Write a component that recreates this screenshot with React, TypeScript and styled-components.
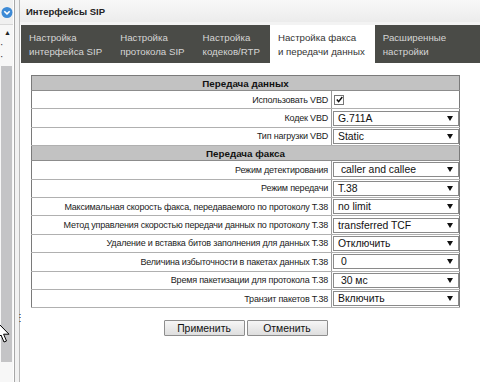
import React from "react";
import styled, { createGlobalStyle } from "styled-components";

const GlobalStyle = createGlobalStyle`
  html, body {
    margin: 0;
    padding: 0;
    background: #ffffff;
  }
  body {
    font-family: "Liberation Sans", Arial, sans-serif;
    color: #222;
  }
`;

type Row = { label: string; value?: string; checkbox?: boolean };

const tabs = [
  ["Настройка", "интерфейса SIP"],
  ["Настройка", "протокола SIP"],
  ["Настройка", "кодеков/RTP"],
  ["Настройка факса", "и передачи данных"],
  ["Расширенные", "настройки"],
];

const dataRows: Row[] = [
  { label: "Использовать VBD", checkbox: true },
  { label: "Кодек VBD", value: "G.711A" },
  { label: "Тип нагрузки VBD", value: "Static" },
];

const faxRows: Row[] = [
  { label: "Режим детектирования", value: " caller and callee" },
  { label: "Режим передачи", value: "T.38" },
  { label: "Максимальная скорость факса, передаваемого по протоколу T.38", value: "no limit" },
  { label: "Метод управления скоростью передачи данных по протоколу T.38", value: "transferred TCF" },
  { label: "Удаление и вставка битов заполнения для данных T.38", value: "Отключить" },
  { label: "Величина избыточности в пакетах данных T.38", value: " 0" },
  { label: "Время пакетизации для протокола T.38", value: " 30 мс" },
  { label: "Транзит пакетов T.38", value: "Включить" },
];

function App() {
  const renderRows = (rows: Row[]) =>
    rows.map((row) => (
      <DataRow key={row.label}>
        <LabelCell>{row.label}</LabelCell>
        <ValueCell>
          {row.checkbox ? (
            <CheckBox>
              <svg width="7" height="7" viewBox="0 0 7 7">
                <path d="M0.8 3.6 L2.6 5.6 L6.3 1" stroke="#111" strokeWidth="1.5" fill="none" />
              </svg>
            </CheckBox>
          ) : (
            <SelectBox>
              <SelectText>{row.value}</SelectText>
              <svg width="6" height="5" viewBox="0 0 6 5">
                <path d="M0 0 H6 L3 5 Z" fill="#111" />
              </svg>
            </SelectBox>
          )}
        </ValueCell>
      </DataRow>
    ));

  return (
    <>
      <GlobalStyle />
      <Page>
        <SidePane>
          <SideTop>
            <svg width="13" height="13" viewBox="0 0 13 13">
              <circle cx="7" cy="6.5" r="5.5" fill="#3d8ad6" />
              <path d="M4.3 5.2 L7 7.9 L9.7 5.2" stroke="#fff" strokeWidth="1.6" fill="none" />
            </svg>
          </SideTop>
          <SideArrow>▲</SideArrow>
          <SideMarks>
            <Mark>·</Mark>
            <Mark>·</Mark>
          </SideMarks>
          <ScrollTrack>
            <ScrollThumb />
          </ScrollTrack>
        </SidePane>
        <Splitter>
          <Grip>⋮</Grip>
        </Splitter>
        <Main>
          <TitleBar>Интерфейсы SIP</TitleBar>
          <TabBar>
            {tabs.map((t, i) => (
              <Tab key={i} $active={i === 3}>
                {t[0]}
                <br />
                {t[1]}
              </Tab>
            ))}
          </TabBar>
          <Content>
            <Table>
              <colgroup>
                <col style={{ width: 300 }} />
                <col />
              </colgroup>
              <tbody>
                <HeaderRow>
                  <HeaderCell colSpan={2}>Передача данных</HeaderCell>
                </HeaderRow>
                {renderRows(dataRows)}
                <HeaderRow>
                  <HeaderCell colSpan={2}>Передача факса</HeaderCell>
                </HeaderRow>
                {renderRows(faxRows)}
              </tbody>
            </Table>
            <Buttons>
              <Button>Применить</Button>
              <Button>Отменить</Button>
            </Buttons>
          </Content>
        </Main>
        <Cursor>
          <svg width="14" height="24" viewBox="0 0 14 24">
            <path
              d="M0 0 L0 17 L4 13 L7 20 L9.5 19 L6.6 12.2 L12 12.2 Z"
              fill="#fff"
              stroke="#000"
              strokeWidth="1"
            />
          </svg>
        </Cursor>
      </Page>
    </>
  );
}

const Page = styled.div`
  position: relative;
  display: flex;
  width: 480px;
  height: 382px;
  overflow: hidden;
  background: #fff;
`;

const SidePane = styled.div`
  width: 13px;
  display: flex;
  flex-direction: column;
  background: #f7f7f7;
  overflow: hidden;
`;

const SideTop = styled.div`
  height: 24px;
  display: flex;
  align-items: center;
  justify-content: flex-end;
  background: #f0f0f0;
  border-bottom: 1px solid #d8d8d8;
`;

const SideArrow = styled.div`
  height: 16px;
  font-size: 7px;
  line-height: 16px;
  text-align: right;
  padding-right: 2px;
  color: #222;
`;

const SideMarks = styled.div`
  height: 25px;
  display: flex;
  flex-direction: column;
  gap: 4px;
`;

const Mark = styled.span`
  font-size: 10px;
  line-height: 8px;
  color: #333;
`;

const ScrollTrack = styled.div`
  flex: 1;
  padding: 0 1px 20px 1px;
  display: flex;
  flex-direction: column;
`;

const ScrollThumb = styled.div`
  flex: 1;
  background: #c4c4c6;
`;

const Splitter = styled.div`
  position: relative;
  width: 6px;
  background: #f2f2f2;
  box-sizing: border-box;
  border-left: 1px solid #a8a8a8;
  border-right: 1px solid #b8b8b8;
  margin-left: 1px;
`;

const Grip = styled.span`
  position: absolute;
  top: 313px;
  left: 0;
  font-size: 10px;
  line-height: 10px;
  color: #333;
`;

const Main = styled.div`
  flex: 1;
  display: flex;
  flex-direction: column;
  background: #fff;
`;

const TitleBar = styled.div`
  height: 22px;
  line-height: 23px;
  padding-left: 6px;
  font-size: 9.5px;
  font-weight: bold;
  color: #222;
  background: linear-gradient(#f8f8f8, #ececec);
  border-bottom: 3px solid #f3f3f3;
`;

const TabBar = styled.div`
  display: flex;
  height: 38px;
  margin-left: 1px;
  background: #4a4b47;
`;

const Tab = styled.div<{ $active?: boolean }>`
  padding: 6px 10px 0 8px;
  font-size: 9.7px;
  line-height: 14px;
  white-space: nowrap;
  color: ${(p) => (p.$active ? "#333" : "#d6d6d6")};
  background: ${(p) => (p.$active ? "#ffffff" : "transparent")};
`;

const Content = styled.div`
  padding: 12px 0 0 11px;
`;

const Table = styled.table`
  width: 429px;
  border-collapse: collapse;
  border: 1px solid #7a7a7a;
  table-layout: fixed;
`;

const HeaderRow = styled.tr`
  height: 15px;
  background: #c2c2c2;
`;

const HeaderCell = styled.td`
  padding: 0;
  text-align: center;
  font-size: 9.8px;
  font-weight: bold;
  color: #111;
  border-bottom: 1px solid #8c8c8c;
`;

const DataRow = styled.tr`
  height: 18.4px;
`;

const LabelCell = styled.td`
  padding: 0 3px 0 0;
  text-align: right;
  font-size: 9px;
  letter-spacing: -0.2px;
  color: #222;
  white-space: nowrap;
  overflow: hidden;
  border-bottom: 1px solid #b0b0b0;
  border-right: 1px solid #9a9a9a;
`;

const ValueCell = styled.td`
  padding: 0 0 0 1px;
  border-bottom: 1px solid #b0b0b0;
`;

const SelectBox = styled.div`
  display: flex;
  align-items: center;
  justify-content: space-between;
  width: 126px;
  height: 15px;
  box-sizing: border-box;
  padding: 0 5px 0 4px;
  border: 1px solid #8a8a8a;
  background: #fff;
`;

const SelectText = styled.span`
  font-size: 10.4px;
  color: #111;
  white-space: pre;
`;

const CheckBox = styled.span`
  display: flex;
  align-items: center;
  justify-content: center;
  width: 8px;
  height: 8px;
  margin-left: 1px;
  border: 1px solid #777;
  background: #fff;
`;

const Buttons = styled.div`
  display: flex;
  justify-content: center;
  gap: 2px;
  width: 429px;
  margin-top: 12px;
`;

const Button = styled.button`
  width: 81px;
  height: 16px;
  padding: 0;
  font-family: "Liberation Sans", Arial, sans-serif;
  font-size: 10.4px;
  color: #111;
  border: 1px solid #8e8e8e;
  border-radius: 1px;
  background: linear-gradient(#f6f6f6, #dedede);
`;

const Cursor = styled.div`
  position: absolute;
  left: -3px;
  top: 322px;
`;

export default App;
